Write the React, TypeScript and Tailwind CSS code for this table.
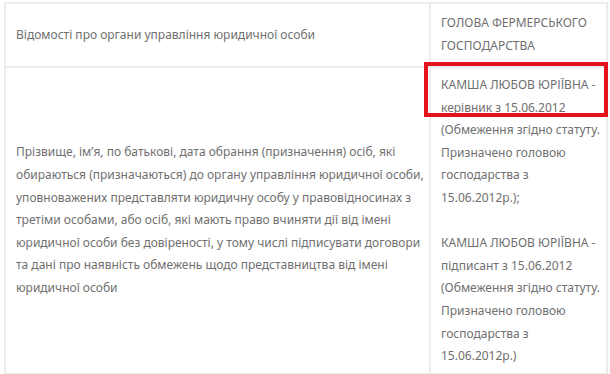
import React from 'react';

const font = { fontFamily: '"Noto Sans", "Open Sans", sans-serif' };

const leftLines = [
    'Прізвище, ім’я, по батькові, дата обрання (призначення) осіб, які',
    'обираються (призначаються) до органу управління юридичної особи,',
    'уповноважених представляти юридичну особу у правовідносинах з',
    'третіми особами, або осіб, які мають право вчиняти дії від імені',
    'юридичної особи без довіреності, у тому числі підписувати договори',
    'та дані про наявність обмежень щодо представництва від імені',
    'юридичної особи',
];

const rightLines = [
    'КАМША ЛЮБОВ ЮРІЇВНА -',
    'керівник з 15.06.2012',
    '(Обмеження згідно статуту.',
    'Призначено головою',
    'господарства з',
    '15.06.2012р.);',
    '\u00a0',
    'КАМША ЛЮБОВ ЮРІЇВНА -',
    'підписант з 15.06.2012',
    '(Обмеження згідно статуту.',
    'Призначено головою',
    'господарства з',
    '15.06.2012р.)',
];

const App: React.FC = () => {
    return (
        <div className="w-[610px] h-[374px] bg-white overflow-hidden pt-[2px] pl-[4px] relative" style={font}>
            <table className="table-fixed w-[602px] border-collapse text-[12px] leading-[22.6px] text-[#6f6f6f]">
                <colgroup>
                    <col className="w-[425px]" />
                    <col className="w-[177px]" />
                </colgroup>
                <tbody>
                    <tr className="h-[64px]">
                        <td className="border-2 border-[#ececec] pl-[10px] align-middle whitespace-nowrap">
                            Відомості про органи управління юридичної особи
                        </td>
                        <td className="border-2 border-[#ececec] pl-[10px] align-middle">
                            ГОЛОВА ФЕРМЕРСЬКОГО<br />ГОСПОДАРСТВА
                        </td>
                    </tr>
                    <tr className="h-[307px]">
                        <td className="border-2 border-[#ececec] pl-[10px] align-middle whitespace-nowrap">
                            {leftLines.map((l, i) => <div key={i}>{l}</div>)}
                        </td>
                        <td className="border-2 border-[#ececec] pl-[10px] pt-[6px] pb-[3px] align-top whitespace-nowrap">
                            {rightLines.map((l, i) => <div key={i}>{l}</div>)}
                        </td>
                    </tr>
                </tbody>
            </table>
            {/* red annotation frame */}
            <div className="absolute left-[424px] top-[62px] w-[184px] h-[55px] border-[4px] border-[#e3121c]" />
        </div>
    );
};

export default App;
